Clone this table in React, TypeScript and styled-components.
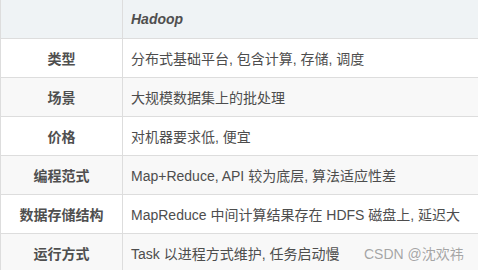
import React from "react";
import styled, { createGlobalStyle } from "styled-components";

const Global = createGlobalStyle`
  html, body { margin: 0; padding: 0; background: #ffffff; }
  body { width: 478px; height: 270px; overflow: hidden; position: relative; }
`;

const Table = styled.table`
  width: 480px;
  border-collapse: separate;
  border-spacing: 0;
  table-layout: fixed;
  font-family: "Liberation Sans", "Noto Sans CJK SC", sans-serif;
  font-size: 14px;
  color: #4d4d4d;
`;

const HeadCell = styled.th<{ $first?: boolean }>`
  height: 38px;
  padding: 0 8px;
  background: #eff3f5;
  border-bottom: 1px solid #dddddd;
  border-right: 1px solid #dddddd;
  border-left: ${(p) => (p.$first ? "1px solid #dddddd" : "none")};
  text-align: left;
  font-weight: bold;
  font-style: italic;
  color: #4f4f4f;
`;

const Row = styled.tr<{ $striped: boolean }>`
  background: ${(p) => (p.$striped ? "#f8f8f8" : "#ffffff")};
`;

const LabelCell = styled.td`
  height: 38px;
  padding: 0 8px;
  border-left: 1px solid #dddddd;
  border-right: 1px solid #dddddd;
  border-bottom: 1px solid #dddddd;
  text-align: center;
  font-weight: bold;
  color: #4f4f4f;
`;

const ValueCell = styled.td`
  height: 38px;
  padding: 0 8px;
  border-right: 1px solid #dddddd;
  border-bottom: 1px solid #dddddd;
  text-align: left;
  white-space: nowrap;
`;

const Watermark = styled.div`
  position: absolute;
  left: 364px;
  top: 243px;
  font-family: "Liberation Sans", "Noto Sans CJK SC", sans-serif;
  font-size: 14px;
  color: rgba(150, 150, 150, 0.85);
  white-space: nowrap;
`;

const rows: [string, string][] = [
  ["类型", "分布式基础平台, 包含计算, 存储, 调度"],
  ["场景", "大规模数据集上的批处理"],
  ["价格", "对机器要求低, 便宜"],
  ["编程范式", "Map+Reduce, API 较为底层, 算法适应性差"],
  ["数据存储结构", "MapReduce 中间计算结果存在 HDFS 磁盘上, 延迟大"],
  ["运行方式", "Task 以进程方式维护, 任务启动慢"],
];

export default function App() {
  return (
    <>
      <Global />
      <Table>
        <colgroup>
          <col style={{ width: "123px" }} />
          <col />
        </colgroup>
        <thead>
          <tr>
            <HeadCell $first />
            <HeadCell>Hadoop</HeadCell>
          </tr>
        </thead>
        <tbody>
          {rows.map(([k, v], i) => (
            <Row key={k} $striped={i % 2 === 1}>
              <LabelCell>{k}</LabelCell>
              <ValueCell>{v}</ValueCell>
            </Row>
          ))}
        </tbody>
      </Table>
      <Watermark>CSDN @沈欢祎</Watermark>
    </>
  );
}
